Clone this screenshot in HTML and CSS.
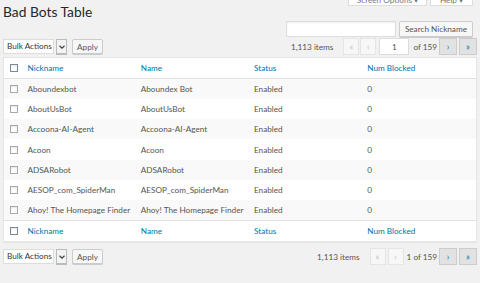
FILE: index.html
```html
<!DOCTYPE html>
<html lang="en">
<head>
  <meta charset="UTF-8">
  <title>Bad Bots Table</title>
  <link rel="stylesheet" href="styles.css">
</head>
<body>
  <div class="screen-meta-links">
    <div class="meta-tab">Screen Options ▾</div>
    <div class="meta-tab">Help ▾</div>
  </div>

  <div class="wrap">
    <h1>Bad Bots Table</h1>

    <div class="search-box">
      <input type="search" class="search-input">
      <button class="button">Search Nickname</button>
    </div>

    <div class="tablenav">
      <div class="bulk-actions">
        <div class="select">
          <span class="select-label">Bulk Actions</span>
          <span class="select-arrow">
            <svg width="6" height="4" viewBox="0 0 6 4"><polyline points="0.5,0.8 3,3.2 5.5,0.8" fill="none" stroke="#444" stroke-width="1.2"/></svg>
          </span>
        </div>
        <button class="button">Apply</button>
      </div>
      <div class="pagination">
        <span class="num-items">1,113 items</span>
        <span class="page-btn disabled">«</span>
        <span class="page-btn disabled prev">‹</span>
        <input class="page-input" type="text" value="1">
        <span class="page-of">of 159</span>
        <span class="page-btn active">›</span>
        <span class="page-btn active last">»</span>
      </div>
    </div>

    <table class="bots-table">
      <thead>
        <tr>
          <th class="col-cb"><span class="checkbox"></span></th>
          <th>Nickname</th>
          <th>Name</th>
          <th>Status</th>
          <th>Num Blocked</th>
        </tr>
      </thead>
      <tbody>
        <tr>
          <td class="col-cb"><span class="checkbox"></span></td>
          <td>Aboundexbot</td><td>Aboundex Bot</td><td>Enabled</td><td>0</td>
        </tr>
        <tr>
          <td class="col-cb"><span class="checkbox"></span></td>
          <td>AboutUsBot</td><td>AboutUsBot</td><td>Enabled</td><td>0</td>
        </tr>
        <tr>
          <td class="col-cb"><span class="checkbox"></span></td>
          <td>Accoona-AI-Agent</td><td>Accoona-AI-Agent</td><td>Enabled</td><td>0</td>
        </tr>
        <tr>
          <td class="col-cb"><span class="checkbox"></span></td>
          <td>Acoon</td><td>Acoon</td><td>Enabled</td><td>0</td>
        </tr>
        <tr>
          <td class="col-cb"><span class="checkbox"></span></td>
          <td>ADSARobot</td><td>ADSARobot</td><td>Enabled</td><td>0</td>
        </tr>
        <tr>
          <td class="col-cb"><span class="checkbox"></span></td>
          <td>AESOP_com_SpiderMan</td><td>AESOP_com_SpiderMan</td><td>Enabled</td><td>0</td>
        </tr>
        <tr>
          <td class="col-cb"><span class="checkbox"></span></td>
          <td>Ahoy! The Homepage Finder</td><td>Ahoy! The Homepage Finder</td><td>Enabled</td><td>0</td>
        </tr>
      </tbody>
      <tfoot>
        <tr>
          <th class="col-cb"><span class="checkbox"></span></th>
          <th>Nickname</th>
          <th>Name</th>
          <th>Status</th>
          <th>Num Blocked</th>
        </tr>
      </tfoot>
    </table>

    <div class="tablenav bottom">
      <div class="bulk-actions">
        <div class="select">
          <span class="select-label">Bulk Actions</span>
          <span class="select-arrow">
            <svg width="6" height="4" viewBox="0 0 6 4"><polyline points="0.5,0.8 3,3.2 5.5,0.8" fill="none" stroke="#444" stroke-width="1.2"/></svg>
          </span>
        </div>
        <button class="button">Apply</button>
      </div>
      <div class="pagination">
        <span class="num-items">1,113 items</span>
        <span class="page-btn disabled">«</span>
        <span class="page-btn disabled prev">‹</span>
        <span class="page-current">1 of 159</span>
        <span class="page-btn active">›</span>
        <span class="page-btn active last">»</span>
      </div>
    </div>
  </div>
</body>
</html>
```

FILE: styles.css
```css
:root {
  --bg: #f1f1f1;
  --text: #555;
  --heading: #23282d;
  --link: #0073aa;
  --border: #e1e1e1;
  --button-border: #ccc;
  --font: 'Lato', 'Open Sans', sans-serif;
}

* {
  margin: 0;
  padding: 0;
  box-sizing: border-box;
}

body {
  background: var(--bg);
  color: var(--text);
  font-family: var(--font);
  font-size: 8.2px;
  overflow: hidden;
}

/* top tabs, mostly scrolled off the top */
.screen-meta-links {
  height: 6px;
  display: flex;
  justify-content: flex-end;
  align-items: flex-end;
  gap: 3px;
  padding-right: 7px;
  overflow: hidden;
}

.meta-tab {
  height: 18px;
  display: flex;
  align-items: flex-end;
  justify-content: center;
  background: #fff;
  border: 1px solid #ddd;
  border-top: none;
  color: #72777c;
  line-height: 9px;
  white-space: nowrap;
}

.meta-tab:first-child {
  width: 79px;
}

.meta-tab:last-child {
  width: 43px;
}

.wrap {
  padding: 0 3px;
}

h1 {
  margin-top: -4px;
  font-size: 13.8px;
  font-weight: 400;
  line-height: 20px;
  color: var(--heading);
}

.search-box {
  margin-top: -1px;
  height: 16px;
  display: flex;
  justify-content: flex-end;
  gap: 3px;
  padding-right: 4px;
}

.search-input {
  width: 110px;
  height: 16px;
  border: 1px solid #ddd;
  background: #fff;
  box-shadow: inset 0 1px 2px rgba(0, 0, 0, 0.07);
  outline: none;
}

.button {
  height: 16px;
  padding: 0 5px;
  background: #f7f7f7;
  border: 1px solid var(--button-border);
  border-radius: 2px;
  box-shadow: 0 1px 0 #ccc;
  color: var(--text);
  font-family: var(--font);
  font-size: 8.2px;
  line-height: 14px;
  white-space: nowrap;
}

.tablenav {
  margin-top: 1px;
  height: 17px;
  display: flex;
  justify-content: space-between;
  align-items: center;
}

.tablenav.bottom {
  margin-top: 6px;
}

.bulk-actions {
  display: flex;
  align-items: center;
  gap: 4px;
}

.select {
  display: flex;
  align-items: center;
  gap: 2px;
  height: 15px;
}

.select-label {
  width: 51px;
  height: 15px;
  padding-left: 3px;
  background: #fff;
  border: 1px solid #ddd;
  line-height: 13px;
  color: #32373c;
  white-space: nowrap;
  overflow: hidden;
}

.select-arrow {
  width: 11px;
  height: 15px;
  display: flex;
  align-items: center;
  justify-content: center;
  background: #f3f3f3;
  border: 1px solid #bbb;
  box-shadow: 0 1px 0 #bbb;
}

.bulk-actions .button {
  width: 31px;
  height: 15px;
  padding: 0;
  margin-left: 1px;
}

.pagination {
  display: flex;
  align-items: center;
}

.num-items {
  margin-right: 10px;
}

.page-btn {
  width: 16px;
  height: 17px;
  display: flex;
  align-items: center;
  justify-content: center;
  border: 1px solid #ddd;
  font-size: 9px;
  line-height: 1;
}

.page-btn.prev {
  margin-left: 1px;
}

.page-btn.last {
  margin-left: 2px;
}

.page-btn.disabled {
  background: #f7f7f7;
  border-color: #e5e5e5;
  color: #c3c4c7;
}

.page-btn.active {
  width: 18px;
  background: #e2e2e2;
  border-color: #ccc;
  color: var(--link);
}

.page-input {
  width: 30px;
  height: 17px;
  margin-left: 3px;
  border: 1px solid #ddd;
  background: #fff;
  text-align: center;
  font-family: var(--font);
  font-size: 8.2px;
  color: var(--text);
  outline: none;
}

.page-of {
  margin: 0 2px 0 4px;
}

.bottom .page-btn.prev {
  margin-left: 2px;
}

.page-current {
  margin: 0 2px 0 3px;
}

/* list table */
.bots-table {
  width: 100%;
  margin-top: 2px;
  border-collapse: collapse;
  table-layout: fixed;
  background: #fff;
  border: 1px solid #e5e5e5;
  box-shadow: 0 1px 1px rgba(0, 0, 0, 0.04);
}

.bots-table th,
.bots-table td {
  padding: 0 4px;
  text-align: left;
  font-weight: 400;
  white-space: nowrap;
  overflow: hidden;
}

.bots-table th {
  height: 21px;
  color: var(--link);
}

.bots-table thead th {
  border-bottom: 1px solid var(--border);
}

.bots-table tfoot th {
  border-top: 1px solid var(--border);
}

.bots-table td {
  height: 20.3px;
  color: var(--text);
}

.bots-table tbody tr:nth-child(odd) {
  background: #f9f9f9;
}

.bots-table .col-cb {
  width: 20px;
  padding: 0 0 0 6px;
}

.checkbox {
  display: block;
  width: 8px;
  height: 8px;
  background: #fff;
  border: 1px solid #a7aaad;
  box-shadow: inset 0 1px 2px rgba(0, 0, 0, 0.1);
}

thead .checkbox,
tfoot .checkbox {
  border-color: #7e8993;
}
```
